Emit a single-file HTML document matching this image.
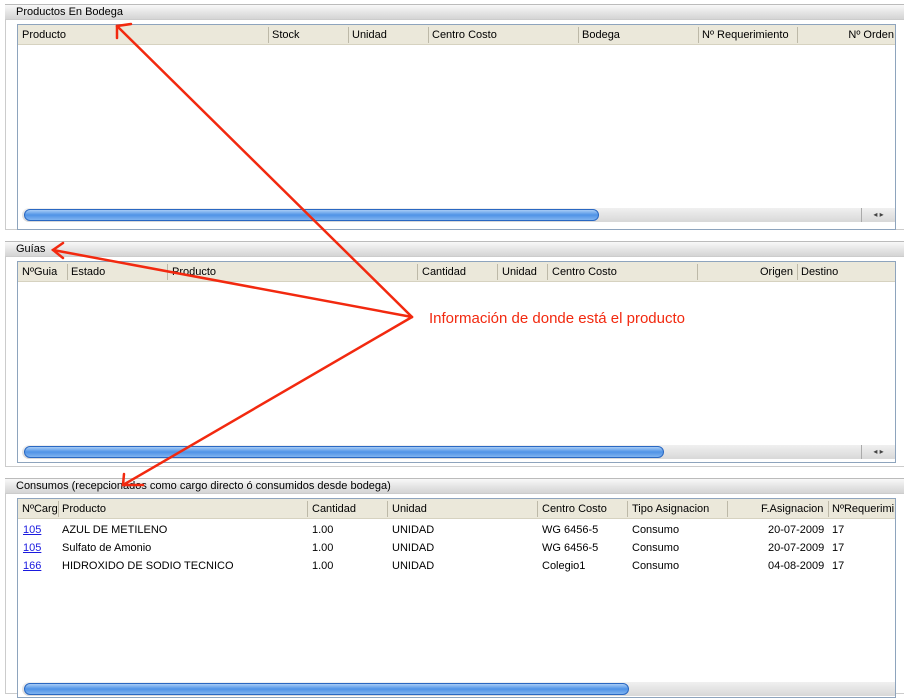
<!DOCTYPE html>
<html><head><style>
*{margin:0;padding:0;box-sizing:border-box}
body{width:904px;height:684px;overflow:hidden;background:#fff;font-family:"Liberation Sans",sans-serif;font-size:11px;color:#000;position:relative}
.hdr{position:absolute;left:5px;width:899px;height:16px;background:linear-gradient(#f8f8f8,#e2e2e2 60%,#d4d4d4);border-top:1px solid #bbb;border-bottom:1px solid #ccc;padding-left:11px;line-height:15px}
.frame{position:absolute;left:5px;width:899px;border-left:1px solid #ccc;border-bottom:1px solid #ccc}
.box{position:absolute;left:17px;width:879px;border:1px solid #8ea4bd;overflow:hidden;background:#fff}
.th{position:absolute;left:0;right:0;top:0;height:20px;background:#ebe8da;border-bottom:1px solid #d6d2c0}
.th span{position:absolute;top:4px;white-space:nowrap}
.th i{position:absolute;top:2px;height:16px;width:1px;background:#bdb9a8}
.sb{position:absolute;left:4px;right:0;height:14px;background:linear-gradient(#f0f0f0,#d8d8d8);border-radius:7px 0 0 7px}
.th2{position:absolute;height:12px;border-radius:6px;top:1px;left:2px;background:linear-gradient(#a8ccf5,#4f93e6 50%,#7fb3f0);border:1px solid #2a68c2}
.arr{position:absolute;right:0;top:0;width:34px;height:14px;font-size:8px;color:#444;text-align:center;line-height:14px;border-left:1px solid #aaa}
.r{position:absolute;left:0;right:0;height:18px}
.r span{position:absolute;top:3px;white-space:nowrap}
a{color:#1a1adf;text-decoration:underline}
</style></head><body>

<div class="hdr" style="top:4px">Productos En Bodega</div>
<div class="frame" style="top:20px;height:210px"></div>
<div class="box" style="top:24px;height:206px">
 <div class="th">
  <span style="left:4px">Producto</span><i style="left:250px"></i>
  <span style="left:254px">Stock</span><i style="left:330px"></i>
  <span style="left:334px">Unidad</span><i style="left:410px"></i>
  <span style="left:414px">Centro Costo</span><i style="left:560px"></i>
  <span style="left:564px">Bodega</span><i style="left:680px"></i>
  <span style="left:684px">Nº Requerimiento</span><i style="left:779px"></i>
  <span style="right:1px">Nº Orden</span>
 </div>
 <div class="sb" style="top:183px"><div class="th2" style="width:575px"></div><div class="arr">◂ ▸</div></div>
</div>

<div class="hdr" style="top:241px">Guías</div>
<div class="frame" style="top:257px;height:210px"></div>
<div class="box" style="top:261px;height:202px">
 <div class="th">
  <span style="left:4px">NºGuia</span><i style="left:49px"></i>
  <span style="left:53px">Estado</span><i style="left:149px"></i>
  <span style="left:154px">Producto</span><i style="left:399px"></i>
  <span style="left:404px">Cantidad</span><i style="left:479px"></i>
  <span style="left:484px">Unidad</span><i style="left:529px"></i>
  <span style="left:534px">Centro Costo</span><i style="left:679px"></i>
  <span style="left:742px">Origen</span><i style="left:779px"></i>
  <span style="left:783px">Destino</span>
 </div>
 <div class="sb" style="top:183px"><div class="th2" style="width:640px"></div><div class="arr">◂ ▸</div></div>
</div>

<div class="hdr" style="top:478px">Consumos (recepcionados como cargo directo ó consumidos desde bodega)</div>
<div class="frame" style="top:494px;height:200px"></div>
<div class="box" style="top:498px;height:200px">
 <div class="th">
  <span style="left:4px">NºCarg</span><i style="left:40px"></i>
  <span style="left:44px">Producto</span><i style="left:289px"></i>
  <span style="left:294px">Cantidad</span><i style="left:369px"></i>
  <span style="left:374px">Unidad</span><i style="left:519px"></i>
  <span style="left:524px">Centro Costo</span><i style="left:609px"></i>
  <span style="left:614px">Tipo Asignacion</span><i style="left:709px"></i>
  <span style="left:743px">F.Asignacion</span><i style="left:810px"></i>
  <span style="left:814px">NºRequerimi</span>
 </div>
 <div class="r" style="top:22px"><span style="left:5px"><a>105</a></span><span style="left:44px">AZUL DE METILENO</span><span style="left:294px">1.00</span><span style="left:374px">UNIDAD</span><span style="left:524px">WG 6456-5</span><span style="left:614px">Consumo</span><span style="left:750px">20-07-2009</span><span style="left:814px">17</span></div>
 <div class="r" style="top:40px"><span style="left:5px"><a>105</a></span><span style="left:44px">Sulfato de Amonio</span><span style="left:294px">1.00</span><span style="left:374px">UNIDAD</span><span style="left:524px">WG 6456-5</span><span style="left:614px">Consumo</span><span style="left:750px">20-07-2009</span><span style="left:814px">17</span></div>
 <div class="r" style="top:58px"><span style="left:5px"><a>166</a></span><span style="left:44px">HIDROXIDO DE SODIO TECNICO</span><span style="left:294px">1.00</span><span style="left:374px">UNIDAD</span><span style="left:524px">Colegio1</span><span style="left:614px">Consumo</span><span style="left:750px">04-08-2009</span><span style="left:814px">17</span></div>
 <div class="sb" style="top:183px"><div class="th2" style="width:605px"></div></div>
</div>

<svg style="position:absolute;left:0;top:0" width="904" height="684">
 <g stroke="#f2290f" stroke-width="2.5" fill="none" stroke-linecap="round">
  <line x1="412" y1="317" x2="117" y2="26"/>
  <polyline points="117,38 117,26 131,24"/>
  <line x1="412" y1="317" x2="53" y2="250"/>
  <polyline points="63,243 53,250 63,258"/>
  <line x1="412" y1="317" x2="123" y2="485"/>
  <polyline points="124,474 123,485 143,485"/>
 </g>
 <text x="429" y="323" fill="#f2290f" font-family="Liberation Sans, sans-serif" font-size="15">Información de donde está el producto</text>
</svg>
</body></html>
